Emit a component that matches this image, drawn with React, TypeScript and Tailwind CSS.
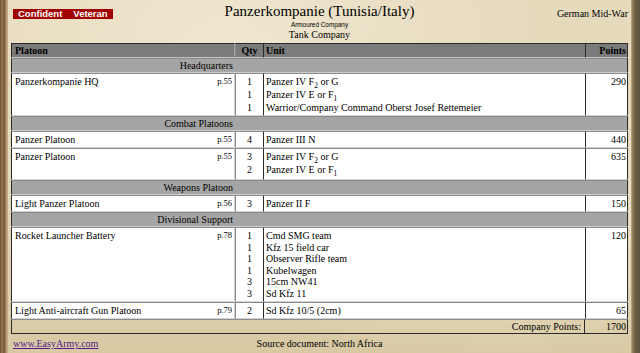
import React from "react";

const COLS = "grid grid-cols-[224px_28px_322px_43px]";

function S({ children }: { children: React.ReactNode }) {
  return <span className="relative top-[3px] text-[7.5px] leading-none">{children}</span>;
}

type Line = { q: string; u: React.ReactNode; sub?: boolean };
type Row = { platoon: string; page: string; lines: Line[]; points: string; tall?: boolean };
type Section = { title: string; rows: Row[] };

const data: Section[] = [
  {
    title: "Headquarters",
    rows: [
      {
        platoon: "Panzerkompanie HQ",
        page: "p.55",
        points: "290",
        lines: [
          { q: "1", u: <>Panzer IV F<S>2</S> or G</>, sub: true },
          { q: "1", u: <>Panzer IV E or F<S>1</S></>, sub: true },
          { q: "1", u: "Warrior/Company Command Oberst Josef Rettemeier" },
        ],
      },
    ],
  },
  {
    title: "Combat Platoons",
    rows: [
      { platoon: "Panzer Platoon", page: "p.55", points: "440", lines: [{ q: "4", u: "Panzer III N" }] },
      {
        platoon: "Panzer Platoon",
        page: "p.55",
        points: "635",
        lines: [
          { q: "3", u: <>Panzer IV F<S>2</S> or G</>, sub: true },
          { q: "2", u: <>Panzer IV E or F<S>1</S></>, sub: true },
        ],
      },
    ],
  },
  {
    title: "Weapons Platoon",
    rows: [{ platoon: "Light Panzer Platoon", page: "p.56", points: "150", lines: [{ q: "3", u: "Panzer II F" }] }],
  },
  {
    title: "Divisional Support",
    rows: [
      {
        platoon: "Rocket Launcher Battery",
        page: "p.78",
        points: "120",
        tall: true,
        lines: [
          { q: "1", u: "Cmd SMG team" },
          { q: "1", u: "Kfz 15 field car" },
          { q: "1", u: "Observer Rifle team" },
          { q: "1", u: "Kubelwagen" },
          { q: "3", u: "15cm NW41" },
          { q: "3", u: "Sd Kfz 11" },
        ],
      },
      {
        platoon: "Light Anti-aircraft Gun Platoon",
        page: "p.79",
        points: "65",
        lines: [{ q: "2", u: "Sd Kfz 10/5 (2cm)" }],
      },
    ],
  },
];

const cellBase =
  "bg-white border-t border-t-[#8c8c8c] border-b border-b-[#d2d2d2] pt-[2px] pb-[2px] leading-[11px]";

function lineH(l: Line, tall?: boolean) {
  if (l.sub) return "h-[13px]";
  return tall ? "h-[11.5px]" : "h-[11px]";
}

function DataRow({ row }: { row: Row }) {
  return (
    <div className={COLS}>
      <div className={`${cellBase} border-l border-l-[#2a2a2a] border-r border-r-[#cfcfcf] pl-[3px] pr-[2px]`}>
        <div className="flex h-[11px] items-center justify-between">
          <span>{row.platoon}</span>
          <span className="text-[8.5px]">{row.page}</span>
        </div>
      </div>
      <div className={`${cellBase} border-l border-l-[#8c8c8c] text-center`}>
        {row.lines.map((l, i) => (
          <div key={i} className={lineH(l, row.tall)}>
            {l.q}
          </div>
        ))}
      </div>
      <div className={`${cellBase} border-l border-l-[#2a2a2a] pl-[2px] whitespace-nowrap`}>
        {row.lines.map((l, i) => (
          <div key={i} className={lineH(l, row.tall)}>
            {l.u}
          </div>
        ))}
      </div>
      <div className={`${cellBase} border-l border-l-[#2a2a2a] border-r border-r-[#2a2a2a] text-right pr-[1px]`}>
        {row.points}
      </div>
    </div>
  );
}

function SectionRow({ title }: { title: string }) {
  return (
    <div className="bg-[#a5a5a5] border-t border-t-[#8a8a8a] border-b border-b-[#cdcdcd] border-l border-l-[#2a2a2a] border-r border-r-[#2a2a2a] py-[1px] leading-[11px]">
      <div className="w-[221px] text-right">{title}</div>
    </div>
  );
}

export default function App() {
  return (
    <div className="flex h-[353px] w-[640px] overflow-hidden font-['Liberation_Serif','Times_New_Roman',serif] text-[10px] text-black">
      <div className="w-[8px] shrink-0 bg-[linear-gradient(90deg,#6b4c30_0px,#9a7b56_2px,#74563a_4px,#a58a64_6px,#cbb892_8px)]" />
      <div className="flex-1 bg-[radial-gradient(ellipse_at_35%_15%,#f0e7d0_0%,transparent_55%),radial-gradient(ellipse_at_80%_60%,#ece2c8_0%,transparent_50%),linear-gradient(180deg,#e6dabd_0%,#e4d8ba_55%,#d8c9a3_100%)]">
        <div className="grid grid-cols-[1fr_auto_1fr] pt-[3px]">
          <div>
            <div className="ml-[5px] mt-[6px] flex h-[10px] w-[100px] items-center bg-[#a00000] pl-[5px] font-['Liberation_Sans',Arial,sans-serif] text-[9.5px] font-bold leading-[10px] text-white">
              <span>Confident</span>
              <span className="ml-[11px]">Veteran</span>
            </div>
          </div>
          <div className="flex flex-col items-center">
            <div className="text-[15px] leading-[17px]">Panzerkompanie (Tunisia/Italy)</div>
            <div className="mt-[1px] font-['Liberation_Sans',Arial,sans-serif] text-[6.4px] leading-[7px]">Armoured Company</div>
            <div className="mt-[1px] leading-[11px]">Tank Company</div>
          </div>
          <div className="mt-[5px] pr-[3px] text-right leading-[11px]">German Mid-War</div>
        </div>

        <div className="ml-[3px] mt-[3px] w-[617px]">
          <div className={`${COLS} bg-[#7b7b7b] font-bold leading-[11px]`}>
            <div className="border-t border-t-[#2a2a2a] border-l border-l-[#2a2a2a] border-r border-r-[#a9a9a9] border-b border-b-[#c4c4c4] py-[1px] pl-[3px]">Platoon</div>
            <div className="border-t border-t-[#2a2a2a] border-l border-l-[#8a8a8a] border-b border-b-[#c4c4c4] py-[1px] text-center">Qty</div>
            <div className="border-t border-t-[#2a2a2a] border-l border-l-[#2a2a2a] border-b border-b-[#c4c4c4] py-[1px] pl-[2px]">Unit</div>
            <div className="border-t border-t-[#2a2a2a] border-l border-l-[#2a2a2a] border-r border-r-[#2a2a2a] border-b border-b-[#c4c4c4] py-[1px] pr-[1px] text-right">Points</div>
          </div>
          {data.map((sec) => (
            <React.Fragment key={sec.title}>
              <SectionRow title={sec.title} />
              {sec.rows.map((r, i) => (
                <DataRow key={i} row={r} />
              ))}
            </React.Fragment>
          ))}
          <div className="grid grid-cols-[574px_43px] leading-[11px]">
            <div className="border-t border-t-[#8c8c8c] border-l border-l-[#2a2a2a] border-r border-r-[#2a2a2a] border-b border-b-[#2a2a2a] py-[1px] pr-[3px] text-right">Company Points:</div>
            <div className="border-t border-t-[#8c8c8c] border-r border-r-[#2a2a2a] border-b border-b-[#2a2a2a] py-[1px] pr-[1px] text-right">1700</div>
          </div>
        </div>

        <div className="mt-[4px] grid grid-cols-[1fr_auto_1fr] leading-[11px]">
          <div className="pl-[5px]">
            <a href="#" className="text-[#551a8b] underline">www.EasyArmy.com</a>
          </div>
          <div>Source document: North Africa</div>
          <div />
        </div>
      </div>
      <div className="w-[9px] shrink-0 bg-[linear-gradient(90deg,#c2ae86_0px,#8a7656_2px,#6b5a40_5px,#5e5640_9px)]" />
    </div>
  );
}
